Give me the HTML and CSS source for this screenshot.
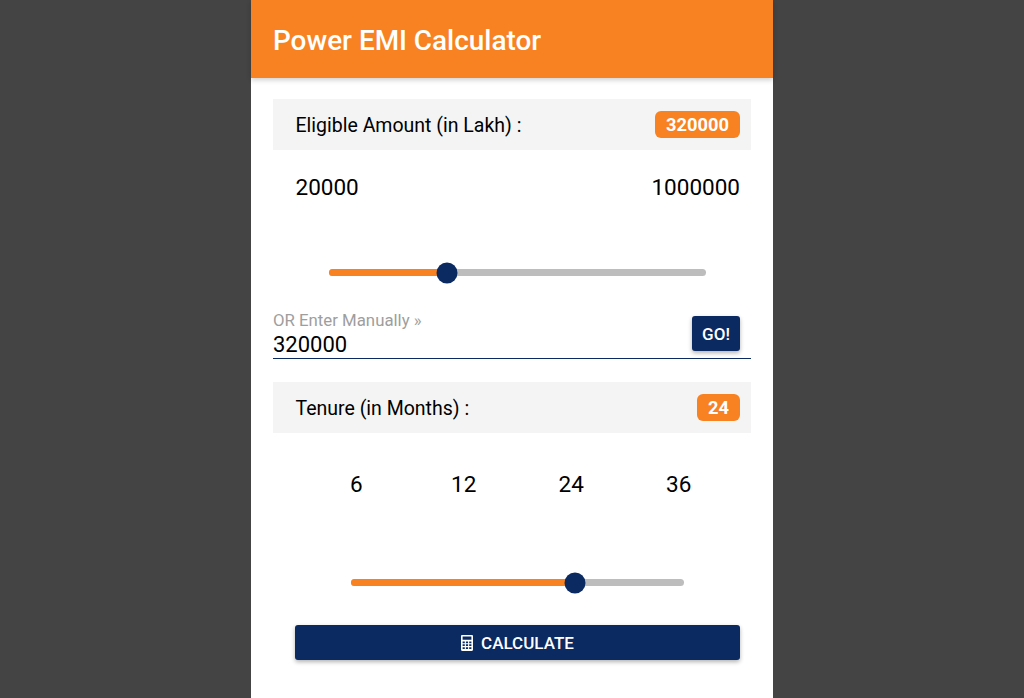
FILE: index.html
```html
<!DOCTYPE html>
<html lang="en">
<head>
  <meta charset="UTF-8" />
  <meta name="viewport" content="width=device-width, initial-scale=1.0"/>
  <title>Power EMI Calculator</title>
  <link rel="stylesheet" href="styles.css">
</head>
<body>
  <div class="app">

    <!-- ======= HEADER ======= -->
    <header class="app-header">
      <h1>Power EMI Calculator</h1>
    </header>

    <main class="content">

      <!-- ======= AMOUNT ======= -->
      <div class="field-row">
        <span class="field-label">Eligible Amount (in Lakh) :</span>
        <span class="badge">320000</span>
      </div>

      <div class="range-labels">
        <span>20000</span>
        <span>1000000</span>
      </div>

      <div class="slider slider-amount">
        <div class="slider-fill" style="width: 31.3%"></div>
        <div class="slider-thumb" style="left: 31.3%"></div>
      </div>

      <div class="manual">
        <div class="manual-input">
          <label class="manual-label" for="manualAmount">OR Enter Manually »</label>
          <input class="manual-value" id="manualAmount" type="text" value="320000">
        </div>
        <button class="btn btn-go" type="button">GO!</button>
      </div>

      <!-- ======= TENURE ======= -->
      <div class="field-row field-row-tenure">
        <span class="field-label">Tenure (in Months) :</span>
        <span class="badge">24</span>
      </div>

      <div class="tenure-options">
        <span>6</span>
        <span>12</span>
        <span>24</span>
        <span>36</span>
      </div>

      <div class="slider slider-tenure">
        <div class="slider-fill" style="width: 67.2%"></div>
        <div class="slider-thumb" style="left: 67.2%"></div>
      </div>

      <button class="btn btn-calculate" type="button">
        <svg class="calc-icon" viewBox="0 0 12 16" width="12" height="16" aria-hidden="true">
          <path fill="#fff" fill-rule="evenodd" d="M1.2 0h9.6C11.5 0 12 .5 12 1.2v13.6c0 .7-.5 1.2-1.2 1.2H1.2C.5 16 0 15.500 0 14.800V1.200C0 .5.500 0 1.200 0zM1.600 1.600v3.200h8.800V1.600zM1.600 6.400v1.800h2.200V6.400zM4.900 6.400v1.800h2.200V6.400zM8.200 6.400v1.800h2.200V6.400zM1.600 9.300v1.800h2.200V9.300zM4.900 9.300v1.800h2.200V9.300zM8.200 9.300v1.800h2.200V9.300zM1.600 12.200v1.900h2.200v-1.900zM4.900 12.200v1.900h2.200v-1.900zM8.200 12.200v1.900h2.200v-1.900z"/>
        </svg>
        CALCULATE
      </button>

    </main>
  </div>
</body>
</html>
```

FILE: styles.css
```css
* {
  box-sizing: border-box;
}

html, body {
  height: 100%;
}

body {
  margin: 0;
  background: #444444;
  font-family: Roboto, "Liberation Sans", sans-serif;
  color: #000;
  overflow: hidden;
}

.app {
  width: 522px;
  height: 100%;
  margin: 0 auto;
  background: #fff;
}

/* ===== HEADER ===== */
.app-header {
  height: 78px;
  padding: 3px 22px 0;
  display: flex;
  align-items: center;
  background: #f88221;
  box-shadow: 0 2px 5px rgba(0, 0, 0, 0.2);
}

.app-header h1 {
  margin: 0;
  color: #fff;
  font-size: 27.9px;
  font-weight: 500;
}

.content {
  padding: 21px 22px 0;
}

/* ===== ROWS ===== */
.field-row {
  height: 51px;
  padding: 0 11px 0 22.5px;
  display: flex;
  justify-content: space-between;
  align-items: center;
  background: #f4f4f4;
}

.field-label {
  padding-top: 2px;
  font-size: 19.5px;
}

.badge {
  height: 27px;
  padding: 0 11px;
  display: flex;
  align-items: center;
  border-radius: 6px;
  background: #f88221;
  color: #fff;
  font-size: 18.3px;
  font-weight: 700;
}

.range-labels {
  height: 72px;
  padding: 2px 11px 0 22.5px;
  display: flex;
  justify-content: space-between;
  align-items: center;
  font-size: 22.5px;
}

/* ===== SLIDERS ===== */
.slider {
  position: relative;
  height: 7px;
  border-radius: 4px;
  background: #bdbdbd;
}

.slider-amount {
  margin: 47px 45px 0 56px;
}

.slider-tenure {
  margin: 44px 67px 0 78px;
}

.slider-fill {
  height: 100%;
  border-radius: 4px 0 0 4px;
  background: #f88221;
}

.slider-thumb {
  position: absolute;
  top: 50%;
  width: 21px;
  height: 21px;
  border-radius: 50%;
  background: #0b2a61;
  transform: translate(-50%, -50%);
}

/* ===== MANUAL INPUT ===== */
.manual {
  margin-top: 34px;
  padding-right: 11px;
  display: flex;
  justify-content: space-between;
  align-items: flex-start;
  border-bottom: 1px solid #0b2a61;
}

.manual-input {
  flex: 1;
  display: flex;
  flex-direction: column;
}

.manual-label {
  font-size: 16.8px;
  line-height: 20px;
  color: #9e9e9e;
}

.manual-value {
  width: 200px;
  height: 28px;
  padding: 0;
  border: 0;
  outline: 0;
  background: none;
  font-family: inherit;
  font-size: 22px;
  color: #000;
}

/* ===== BUTTONS ===== */
.btn {
  border: 0;
  border-radius: 3px;
  background: #0b2a61;
  color: #fff;
  font-family: inherit;
  font-weight: 500;
  box-shadow: 0 2px 4px rgba(0, 0, 0, 0.3);
}

.btn-go {
  width: 48px;
  height: 35px;
  margin-top: 6px;
  padding: 0;
  font-size: 17px;
}

.btn-calculate {
  width: 445px;
  height: 35px;
  margin: 39px 0 0 22px;
  display: flex;
  justify-content: center;
  align-items: center;
  gap: 8px;
  font-size: 17px;
}

.calc-icon {
  display: block;
}

/* ===== TENURE ===== */
.field-row-tenure {
  margin-top: 23px;
}

.tenure-options {
  height: 102px;
  padding-left: 29.5px;
  display: grid;
  grid-template-columns: repeat(4, 107.5px);
  align-items: center;
  justify-items: center;
  font-size: 22.5px;
}
```
